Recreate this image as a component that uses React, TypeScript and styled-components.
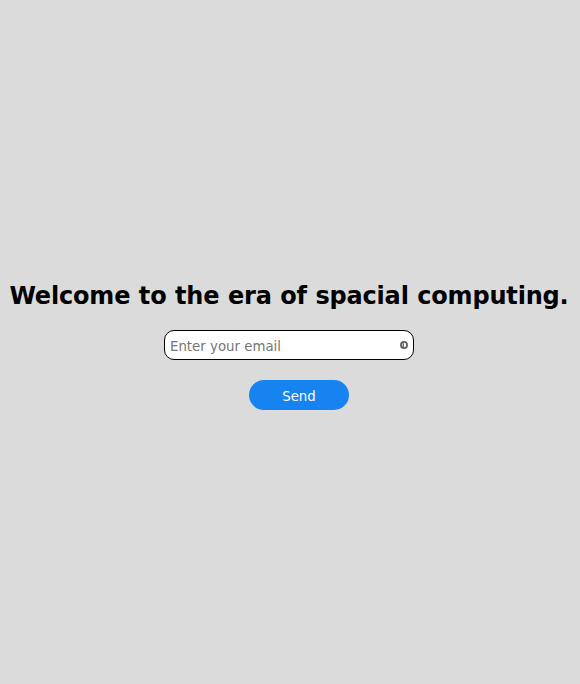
import React from "react";
import styled, { createGlobalStyle } from "styled-components";

const GlobalStyle = createGlobalStyle`
  body { margin: 0; background: #dbdbdb; }
`;

const Page = styled.main`
  height: 684px;
  display: flex;
  flex-direction: column;
  align-items: center;
  justify-content: center;
  font-family: Verdana, "DejaVu Sans", sans-serif;
  background: #dbdbdb;
  box-sizing: border-box;
  padding-top: 8px;
`;

const Title = styled.h1`
  margin: 0 2px 20px 0;
  font-size: 24px;
  line-height: 28px;
  font-weight: 700;
  letter-spacing: -0.18px;
  word-spacing: 0.4px;
  color: #000;
  white-space: nowrap;
`;

const Field = styled.label`
  box-sizing: border-box;
  width: 250px;
  height: 30px;
  margin-right: 2px;
  padding: 0 5px;
  display: flex;
  align-items: center;
  background: #fff;
  border: 1px solid #000;
  border-radius: 10px;
`;

const EmailInput = styled.input`
  flex: 1;
  min-width: 0;
  padding: 2px 0 0;
  border: 0;
  outline: 0;
  background: transparent;
  font: 13.333px Verdana, "DejaVu Sans", sans-serif;
  &::placeholder { color: #757575; }
`;

const SendButton = styled.button`
  width: 100px;
  height: 30px;
  margin: 20px 0 0 18px;
  padding: 2px 0 0;
  border: 0;
  border-radius: 15px;
  background: #1683f1;
  color: #fff;
  font: 13.333px Verdana, "DejaVu Sans", sans-serif;
`;

const KeyIcon = () => (
  <svg width="8" height="8" viewBox="0 0 8 8">
    <circle cx="4" cy="4" r="3.1" fill="#fff" stroke="#5c5c5c" strokeWidth="1.7" />
    <path d="M2.6 2.2h1.3v3.9H2.6z" fill="#5c5c5c" />
  </svg>
);

export default function App() {
  return (
    <Page>
      <GlobalStyle />
      <Title>Welcome to the era of spacial computing.</Title>
      <Field>
        <EmailInput type="email" placeholder="Enter your email" />
        <KeyIcon />
      </Field>
      <SendButton type="button">Send</SendButton>
    </Page>
  );
}
